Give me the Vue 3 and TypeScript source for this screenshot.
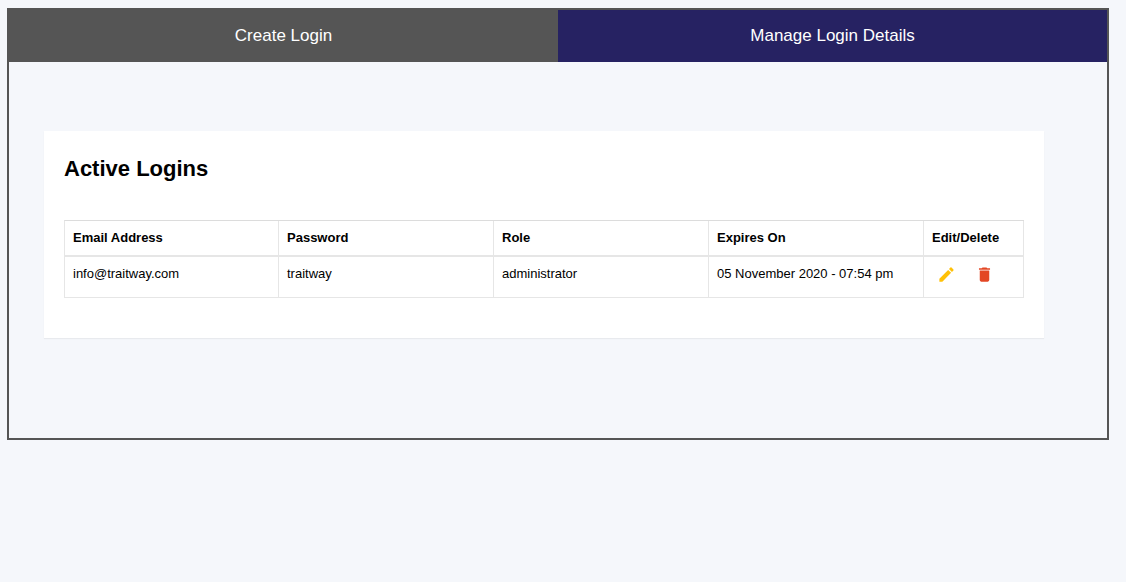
<script setup lang="ts">
import { ref } from 'vue'

interface Login {
  email: string
  password: string
  role: string
  expires: string
}

const tabs: string[] = ['Create Login', 'Manage Login Details']
const activeTab = ref(1)
const columns: string[] = ['Email Address', 'Password', 'Role', 'Expires On', 'Edit/Delete']
const logins: Login[] = [
  {
    email: 'info@traitway.com',
    password: 'traitway',
    role: 'administrator',
    expires: '05 November 2020 - 07:54 pm',
  },
]
</script>

<template>
  <main class="frame">
    <nav class="tabs">
      <button
        v-for="(tab, i) in tabs"
        :key="tab"
        class="tab"
        :class="{ active: i === activeTab }"
        @click="activeTab = i"
      >
        {{ tab }}
      </button>
    </nav>
    <section class="card">
      <h2 class="title">Active Logins</h2>
      <div class="table">
        <div class="row head">
          <div v-for="column in columns" :key="column" class="cell">{{ column }}</div>
        </div>
        <div v-for="login in logins" :key="login.email" class="row body">
          <div class="cell">{{ login.email }}</div>
          <div class="cell">{{ login.password }}</div>
          <div class="cell">{{ login.role }}</div>
          <div class="cell">{{ login.expires }}</div>
          <div class="cell actions">
            <svg class="icon edit" viewBox="0 0 24 24" aria-label="Edit">
              <path d="M3 17.25V21h3.75L17.81 9.94l-3.75-3.75L3 17.25zM20.71 7.04a1 1 0 0 0 0-1.41l-2.34-2.34a1 1 0 0 0-1.41 0l-1.83 1.83 3.75 3.75 1.83-1.83z" />
            </svg>
            <svg class="icon delete" viewBox="0 0 24 24" aria-label="Delete">
              <path d="M6 19c0 1.1.9 2 2 2h8c1.1 0 2-.9 2-2V7H6v12zM19 4h-3.5l-1-1h-5l-1 1H5v2h14V4z" />
            </svg>
          </div>
        </div>
      </div>
    </section>
  </main>
</template>

<style>
body {
  background: #f5f7fb;
}
</style>

<style scoped>
.frame {
  box-sizing: border-box;
  width: 1102px;
  height: 432px;
  margin: 8px 0 0 7px;
  border: 2px solid #555;
  font-family: "Liberation Sans", Arial, sans-serif;
  color: #000;
}
.tabs {
  display: flex;
  height: 52px;
}
.tab {
  flex: 1;
  border: 0;
  padding: 0;
  background: #555;
  color: #fff;
  font: 17px "Liberation Sans", Arial, sans-serif;
}
.tab.active {
  background: #262262;
}
.card {
  box-sizing: border-box;
  width: 1000px;
  height: 207px;
  margin: 69px 0 0 35px;
  padding: 24px 20px 0;
  background: #fff;
  box-shadow: 0 1px 1px rgba(0, 0, 0, 0.05);
}
.title {
  margin: 0 0 38px;
  font-size: 22px;
  line-height: 27px;
  font-weight: 700;
}
.table {
  border-top: 1px solid #dcdcdc;
  border-left: 1px solid #e6e6e6;
  font-size: 13px;
}
.row {
  display: grid;
  grid-template-columns: 214px 215px 215px 215px 100px;
}
.head {
  height: 34px;
  border-bottom: 2px solid #e6e6e6;
  font-weight: 700;
}
.body {
  height: 40px;
  border-bottom: 1px solid #e6e6e6;
}
.cell {
  padding: 8px 0 0 8px;
  border-right: 1px solid #e6e6e6;
  line-height: 17px;
  white-space: nowrap;
}
.actions {
  display: flex;
  padding: 8px 0 0 13px;
}
.icon {
  width: 19px;
  height: 19px;
}
.edit {
  fill: #ffc107;
}
.delete {
  margin-left: 19px;
  fill: #e34724;
}
</style>
